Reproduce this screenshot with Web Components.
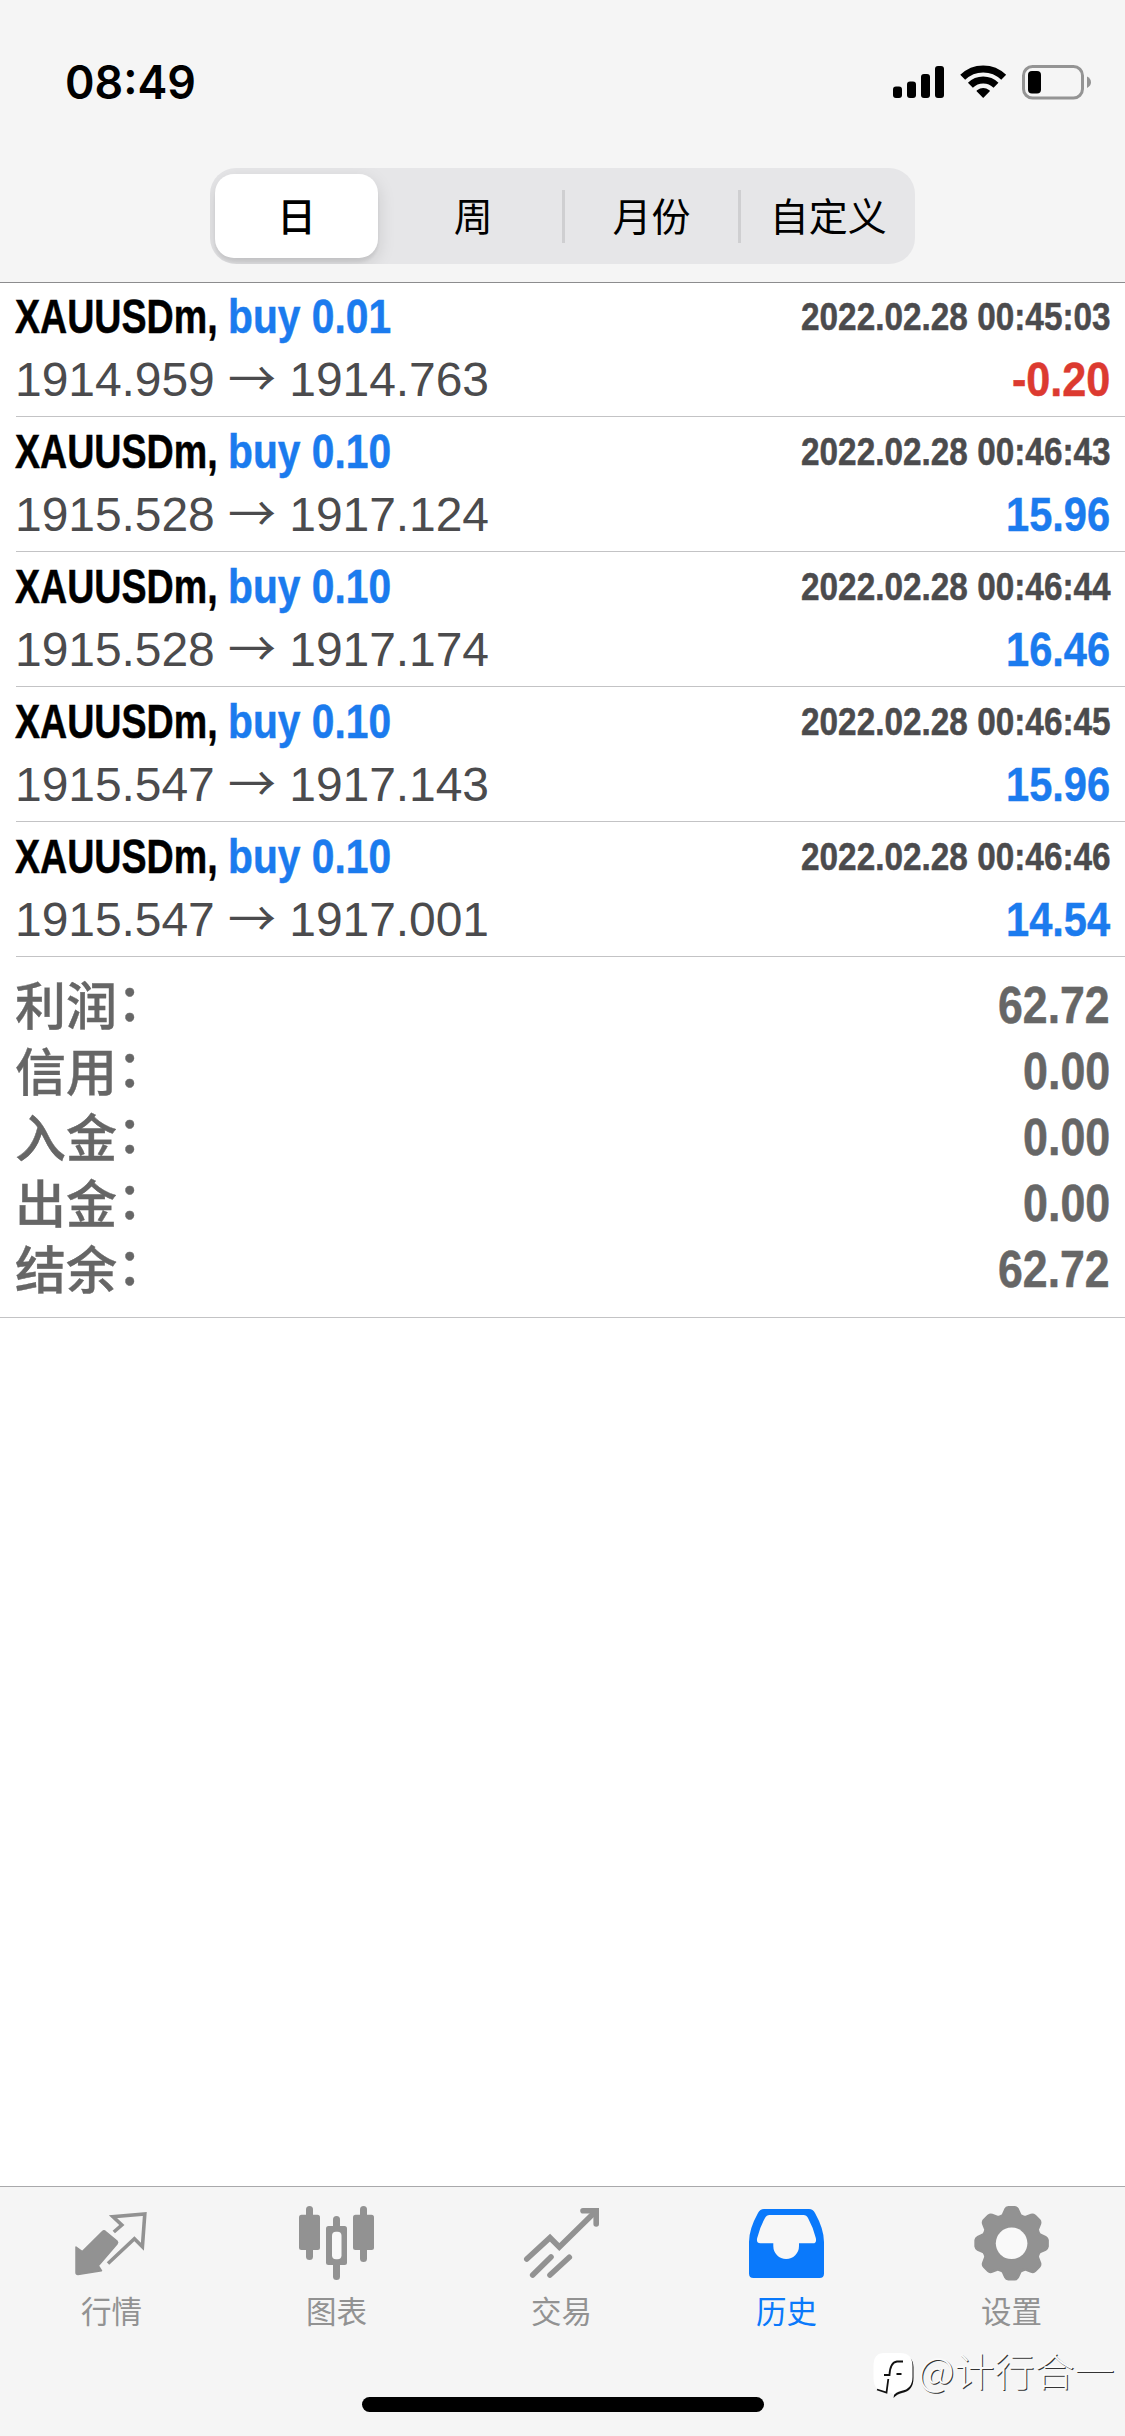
<!DOCTYPE html>
<html lang="zh-CN">
<head>
<meta charset="utf-8">
<title>历史</title>
<style>
html, body { margin: 0; padding: 0; }
body { width: 1125px; height: 2436px; background: #fff; overflow: hidden; }
</style>
</head>
<body>
<history-app></history-app>
<script>
const define = (name, html, setup) => {
  const tpl = document.createElement('template');
  tpl.innerHTML = html;
  customElements.define(name, class extends HTMLElement {
    connectedCallback() {
      if (this.shadowRoot) return;
      const root = this.attachShadow({ mode: 'open' });
      const part = tpl.content.cloneNode(true);
      if (setup) setup(this, part);
      root.appendChild(part);
    }
  });
};

/* Condenses its text horizontally to the width given in "w". */
customElements.define('fit-text', class extends HTMLElement {
  connectedCallback() {
    if (this.shadowRoot) return;
    const root = this.attachShadow({ mode: 'open' });
    const w = parseFloat(this.getAttribute('w'));
    root.innerHTML = `<style>
      :host { display: block; width: ${w}px; white-space: pre; }
      span { display: inline-block; transform-origin: 0 50%; vertical-align: top; }
      </style><span><slot></slot></span>`;
    const s = root.querySelector('span');
    s.style.transform = `scaleX(${w / s.offsetWidth})`;
  }
});

define('status-bar', `<style>
  :host { display: flex; justify-content: space-between; align-items: flex-start; height: 168px; padding: 0 34px 0 64px; box-sizing: border-box; }
  fit-text { font: 600 46px/56px Inter, sans-serif; color: #000; margin: 54px 0 0 .5px; }
  svg { display: block; margin-top: 60px; }
</style>
<fit-text w="131.5">08:49</fit-text>
<svg width="201" height="44" viewBox="890 60 201 44">
  <rect x="893" y="86.5" width="9" height="11.5" rx="3"/>
  <rect x="907" y="81.5" width="9" height="16.5" rx="3"/>
  <rect x="921" y="74" width="9" height="24" rx="3"/>
  <rect x="935" y="66" width="9" height="32" rx="3"/>
  <g fill="none" stroke="#000" stroke-width="7">
    <path d="M962.7 77.3A29.2 29.2 0 0 1 1003.7 77.3"/>
    <path d="M970.4 85.2A18.2 18.2 0 0 1 996 85.2"/>
  </g>
  <path d="M983.2 98L976.6 91.2Q976.4 90.6 977 90.2Q983.2 86 989.4 90.2Q990 90.6 989.8 91.2Z"/>
  <rect x="1023.5" y="66.5" width="59" height="31.5" rx="9" fill="none" stroke="#949494" stroke-width="3"/>
  <rect x="1028" y="71" width="13" height="22.5" rx="4"/>
  <path d="M1087 76.5Q1091 78.5 1091 82.3Q1091 86 1087 88Z" fill="#949494"/>
</svg>`);

define('segment-item', `<style>
  :host { flex: none; width: 176.66px; display: flex; align-items: center; justify-content: center; box-sizing: border-box;
    font: 400 39px/48px "Liberation Sans", "Noto Sans CJK SC", sans-serif; color: #000; }
  :host([selected]) { width: 163px; background: #fff; border-radius: 19px; margin: 6px 7px 6px 5px; font-weight: 500;
    box-shadow: 0 6px 18px rgba(0,0,0,.13), 0 4px 3px rgba(0,0,0,.06); }
  :host([divided]) { border-left: 3px solid transparent; border-image: linear-gradient(transparent 22px, #cfcfd1 22px, #cfcfd1 75px, transparent 75px) 0 0 0 3; }
  span { padding-top: 3px; }
</style><span><slot></slot></span>`);

define('segment-control', `<style>
  :host { display: flex; width: 705px; height: 96px; margin-left: 210px; background: #e6e6e8; border-radius: 26px; overflow: hidden; }
</style><slot></slot>`);

define('trade-row', `<style>
  :host { display: block; margin-left: 16px; padding: 3px 15px 5px 0; border-bottom: 1px solid #c3c3c5;
    font: 400 48px/63px "Liberation Sans", Arial, sans-serif; color: #4b4b4d; }
  :host(:first-of-type) { padding-top: 2px; }
  div { display: flex; height: 63px; }
  .sym, .side, .date, .profit { font-weight: 700; -webkit-text-stroke: .5px currentColor; }
  .sym { color: #000; margin-left: -1px; }
  .side { color: #1b7bee; }
  .date { font-size: 39px; margin-left: auto; }
  .profit { color: #1b7bee; margin-left: auto; }
  .profit.loss { color: #dc3a30; }
  .price { margin-left: -1px; white-space: pre; letter-spacing: -.06px; }
  .arrow { font-family: "Noto Sans CJK SC"; line-height: 1; }
</style>
<div><fit-text class="sym" w="213">XAUUSDm, </fit-text><fit-text class="side" w="163"></fit-text><fit-text class="date" w="309.5"></fit-text></div>
<div><span class="price"><span class="from"></span> <span class="arrow">→</span> <span class="to"></span></span><fit-text class="profit" w="104"></fit-text></div>`,
(el, p) => {
  const a = n => el.getAttribute(n);
  p.querySelector('.side').textContent = 'buy ' + a('lots');
  p.querySelector('.date').textContent = '2022.02.28 ' + a('time');
  p.querySelector('.from').textContent = a('from');
  p.querySelector('.to').textContent = a('to');
  const pr = p.querySelector('.profit');
  pr.textContent = a('profit');
  if (a('profit')[0] === '-') { pr.classList.add('loss'); pr.setAttribute('w', '98'); }
});

define('summary-row', `<style>
  :host { display: flex; justify-content: space-between; height: 66px; color: #666;
    font: 500 51px/66px "Liberation Sans", "Noto Sans CJK SC", sans-serif; }
  span { padding-top: 1.5px; -webkit-text-stroke: .4px currentColor; }
  i { font-style: normal; position: relative; top: -4px; }
  fit-text { font-weight: 700; -webkit-text-stroke: .5px currentColor; }
</style>
<span><slot></slot><i>：</i></span><fit-text></fit-text>`,
(el, p) => {
  const v = el.getAttribute('value'), f = p.querySelector('fit-text');
  f.textContent = v;
  f.setAttribute('w', v.length > 4 ? 112 : 87);
});

const gear = (cx, cy) => {
  const pt = (r, deg) => {
    const t = deg * Math.PI / 180;
    return (cx + r * Math.sin(t)).toFixed(2) + ' ' + (cy - r * Math.cos(t)).toFixed(2);
  };
  let d = '';
  for (let k = 0; k < 8; k++) {
    const c = k * 45;
    d += (k ? 'L' : 'M') + pt(29.5, c - 17.5) + 'L' + pt(34.5, c - 10.5) + 'Q' + pt(36.2, c - 8.5) + ' ' + pt(36.2, c - 5)
      + 'L' + pt(36.2, c + 5) + 'Q' + pt(36.2, c + 8.5) + ' ' + pt(34.5, c + 10.5) + 'L' + pt(29.5, c + 17.5)
      + 'Q' + pt(28.8, c + 22.5) + ' ' + pt(29.5, c + 27.5);
  }
  return `<path d="${d}Z" stroke="currentColor" stroke-width="2.4" stroke-linejoin="round"/><circle cx="${cx}" cy="${cy}" r="15.8" fill="#f9f9f9"/>`;
};
const icons = {
  quotes: [73, `<path d="M76 2247L82.3 2251.5L102.5 2231.5Q104 2230 105.5 2231.5L117 2241Q118.3 2242.5 117 2244L98.3 2265.7L101.5 2270.7L78 2274.5Q76 2274.5 76 2272.5Z" stroke="currentColor" stroke-width="1.5" stroke-linejoin="round"/>
    <path d="M113.8 2232L121.8 2225L113 2216.8L144.8 2214L142.4 2246.8L134.4 2238.8L108 2263.5" fill="none" stroke="currentColor" stroke-width="3.6"/>`],
  chart: [298, `<rect x="299" y="2214.7" width="21" height="35.3" rx="2.5"/><rect x="306" y="2206" width="7" height="54" rx="3.5"/>
    <rect x="353" y="2214.7" width="21" height="35.3" rx="2.5"/><rect x="360" y="2206" width="7" height="56" rx="3.5"/>
    <rect x="326" y="2226" width="21" height="39" rx="2.5"/><rect x="333" y="2216" width="7" height="64" rx="3.5"/>
    <rect x="332" y="2231.7" width="9.5" height="27.6" rx="4" fill="#f9f9f9"/>`],
  trade: [523, `<g fill="none" stroke="currentColor" stroke-width="5.6" stroke-linecap="round"><path d="M526.8 2259L550 2237.7L559.3 2247L595 2212"/><path d="M583 2210.8H596.2V2224"/><path d="M532.7 2275L551 2257"/><path d="M550 2275L569.3 2257.3"/></g>`],
  history: [748, `<path d="M764 2209H809Q813 2209 815 2213Q824 2229 824 2242V2273.5Q824 2278 819.5 2278H753.5Q749 2278 749 2273.5V2242Q749 2229 758 2213Q760 2209 764 2209Z"/>
    <path d="M769.5 2215H803.5Q806.5 2215 808 2218Q813 2227 815.8 2238Q817 2243.3 813 2243.3H799V2246A12.8 13 0 0 1 773.3 2246V2243.3H760.5Q756 2243.3 757.2 2238Q760 2227 765 2218Q766.5 2215 769.5 2215Z" fill="#f7f7f7"/>`],
  settings: [973, gear(1011.6, 2243.3)]
};
define('tab-item', `<style>
  :host { flex: 1; display: flex; flex-direction: column; align-items: center; color: #929292; padding-top: 13px; }
  :host([active]) { color: #0a79fb; }
  svg { display: block; fill: currentColor; overflow: visible; }
  span { font: 400 30.5px/40px "Liberation Sans", "Noto Sans CJK SC", sans-serif; margin: 6px 2px 0 0; }
</style><svg width="80" height="86"></svg><span><slot></slot></span>`,
(el, p) => {
  const [x, art] = icons[el.getAttribute('icon')], svg = p.querySelector('svg');
  svg.setAttribute('viewBox', `${x} 2200 80 86`);
  svg.innerHTML = art;
});
define('tab-bar', `<style>
  :host { display: flex; height: 211px; border-top: 1px solid #a9a9ab; background: #f5f5f5; box-sizing: border-box; }
</style><slot></slot>`);

define('home-indicator', `<style>
  :host { display: flex; justify-content: center; align-items: flex-start; height: 39px; background: #f5f5f5; }
  div { width: 402px; height: 15px; border-radius: 8px; background: #000; }
</style><div></div>`);

define('water-mark', `<style>
  :host { position: absolute; left: 872px; top: 2344px; display: flex; align-items: flex-start; color: #fafafa; }
  svg { display: block; margin-top: 6px; }
  fit-text { font: 300 39px/56px "Noto Sans CJK SC", sans-serif; margin: -3px 0 0 3px; text-shadow: 1px 1px 0 #333; }
</style>
<svg width="43" height="52" viewBox="872 2350 43 52">
  <path d="M887 2355H901Q913 2355 913.5 2367V2378Q913.5 2391 902 2393Q897 2394 893.5 2398Q895 2393 891 2392Q876 2391 876 2378V2367Q876 2355 887 2355Z" fill="#111"/>
  <path d="M884 2353H900Q912.5 2353 912.5 2366V2377Q912.5 2389 901 2391Q896 2392 893 2396Q894 2392 886 2392.5Q873.5 2391 873.5 2378V2366Q873.5 2353 884 2353Z" fill="#fff"/>
  <path d="M877 2389.5L886.5 2392.5L888.3 2379M884 2375H889.5Q890 2362.5 897 2361.5H903M896.5 2374H901.5" fill="none" stroke="#111" stroke-width="1.8"/>
</svg>
<fit-text w="197">@计行合一</fit-text>`);

define('history-app', `<style>
  :host { display: flex; flex-direction: column; width: 1125px; height: 2436px; position: relative; background: #fff; }
  header { height: 283px; background: #f5f5f5; border-bottom: 1px solid #8c8c8e; box-sizing: border-box; }
  main { flex: 1; }
  .summary { padding: 16px 15px 14px; border-bottom: 1px solid #c3c3c5; }
</style>
<header>
  <status-bar></status-bar>
  <segment-control><segment-item selected>日</segment-item><segment-item>周</segment-item><segment-item divided>月份</segment-item><segment-item divided>自定义</segment-item></segment-control>
</header>
<main>
  <section>
    <trade-row lots="0.01" time="00:45:03" from="1914.959" to="1914.763" profit="-0.20"></trade-row>
    <trade-row lots="0.10" time="00:46:43" from="1915.528" to="1917.124" profit="15.96"></trade-row>
    <trade-row lots="0.10" time="00:46:44" from="1915.528" to="1917.174" profit="16.46"></trade-row>
    <trade-row lots="0.10" time="00:46:45" from="1915.547" to="1917.143" profit="15.96"></trade-row>
    <trade-row lots="0.10" time="00:46:46" from="1915.547" to="1917.001" profit="14.54"></trade-row>
  </section>
  <section class="summary">
    <summary-row value="62.72">利润</summary-row>
    <summary-row value="0.00">信用</summary-row>
    <summary-row value="0.00">入金</summary-row>
    <summary-row value="0.00">出金</summary-row>
    <summary-row value="62.72">结余</summary-row>
  </section>
</main>
<tab-bar>
  <tab-item icon="quotes">行情</tab-item><tab-item icon="chart">图表</tab-item><tab-item icon="trade">交易</tab-item><tab-item icon="history" active>历史</tab-item><tab-item icon="settings">设置</tab-item>
</tab-bar>
<home-indicator></home-indicator>
<water-mark></water-mark>`);
</script>
</body>
</html>
